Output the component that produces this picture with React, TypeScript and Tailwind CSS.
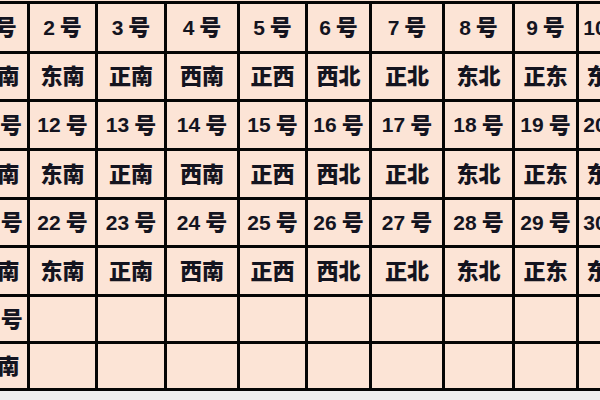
import React from "react";

const dirs = ["东南", "东南", "正南", "西南", "正西", "西北", "正北", "东北", "正东", "东南"];

function Num({ n }: { n: number }) {
  return (
    <span className="flex items-center whitespace-nowrap">
      <span className="text-[21px]">{n}</span>
      <span className="ml-[5px] text-[22px] font-black">号</span>
    </span>
  );
}

function Cell({ children }: { children?: React.ReactNode }) {
  return (
    <div className="bg-[#fce4d6] flex items-center justify-center overflow-hidden">
      {children}
    </div>
  );
}

function Dir({ t }: { t: string }) {
  return <span className="text-[22px] font-black whitespace-nowrap">{t}</span>;
}

export default function App() {
  const rows: React.ReactNode[] = [];
  [1, 11, 21].forEach((start, r) => {
    for (let i = 0; i < 10; i++) rows.push(<Cell key={`n${r}-${i}`}><Num n={start + i} /></Cell>);
    for (let i = 0; i < 10; i++)
      rows.push(
        <Cell key={`d${r}-${i}`}>
          <Dir t={dirs[i]} />
        </Cell>
      );
  });
  rows.push(<Cell key="n31"><Num n={31} /></Cell>);
  for (let i = 1; i < 10; i++) rows.push(<Cell key={`e1-${i}`} />);
  rows.push(
    <Cell key="d31">
      <Dir t="东南" />
    </Cell>
  );
  for (let i = 1; i < 10; i++) rows.push(<Cell key={`e2-${i}`} />);

  return (
    <div className="w-[600px] h-[400px] overflow-hidden bg-[#efefef] flex flex-col">
      <div className="h-[1px] bg-[#fce4d6] shrink-0" />
      <div
        className="ml-[-35px] grid shrink-0 w-max bg-[#050505] gap-[3px] p-[3px] font-bold text-[#14141f] grid-cols-[59px_65px_66px_70px_65px_61px_70px_67px_61px_59px] grid-rows-[47px_45px_46px_46px_45px_46px_44px_44px]"
        style={{ fontFamily: '"Liberation Sans", "Noto Sans CJK SC", sans-serif' }}
      >
        {rows}
      </div>
    </div>
  );
}
